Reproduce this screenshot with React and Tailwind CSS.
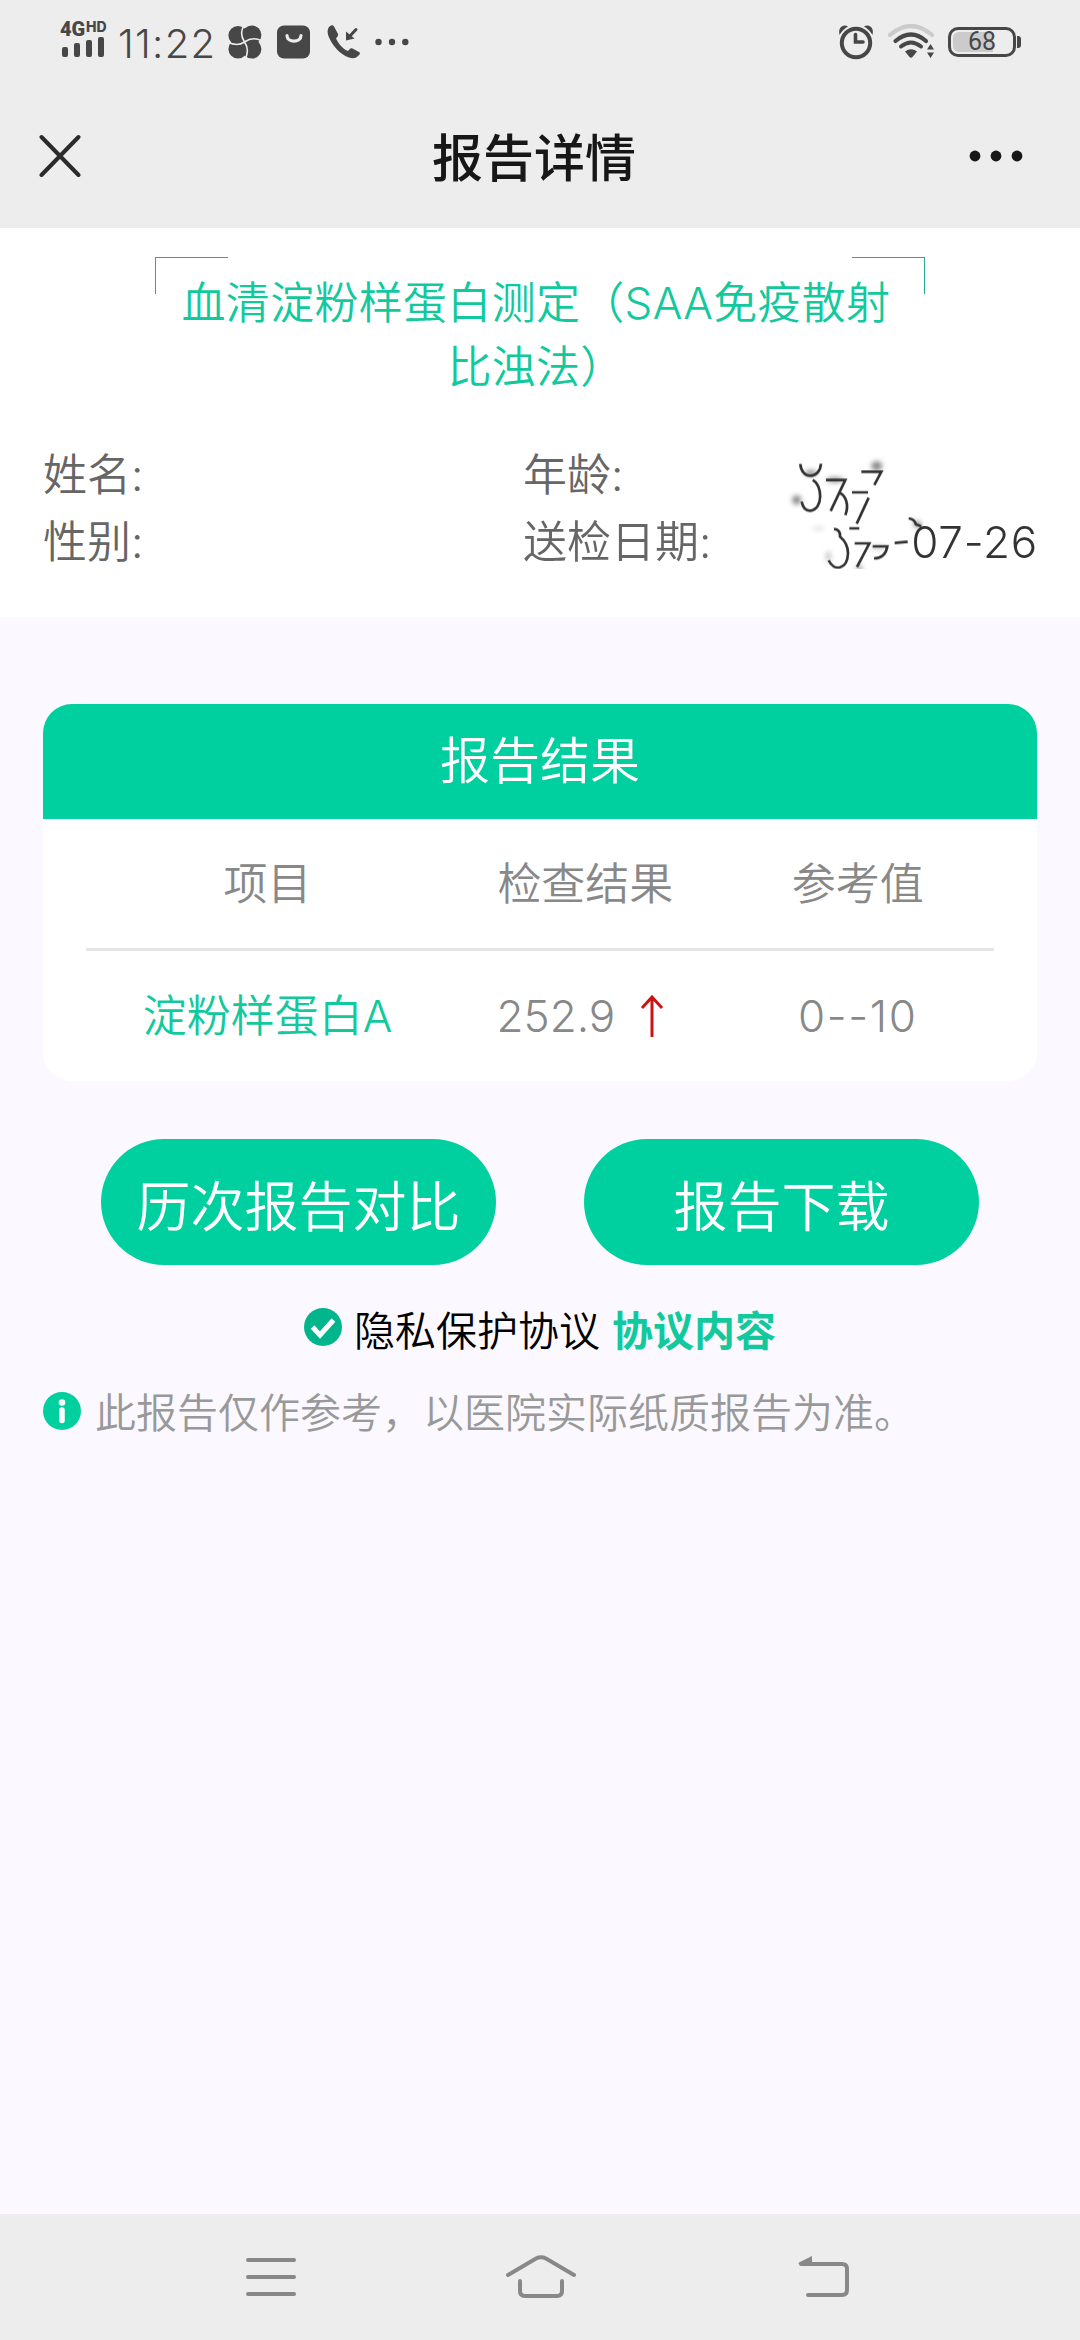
import React from 'react';

const columns = ['项目', '检查结果', '参考值'];

const results = [
  { name: '淀粉样蛋白A', value: '252.9', high: true, reference: '0--10' },
];

const StatusBar = () => (
  <div className="flex h-[84px] items-center justify-between text-[#474747]">
    <div className="flex items-center">
      <div className="ml-[60px] flex h-[84px] w-[48px] flex-col pt-[18px]">
        <div className="flex h-5 items-start font-bold">
          <span className="w-[26px] font-[Roboto] text-[20px] leading-[23px] font-black">4G</span>
          <span className="font-[Inter] text-[14px] leading-[18px] font-extrabold">HD</span>
        </div>
        <svg className="-mt-px ml-[2px]" width="44" height="20" viewBox="0 0 44 20" fill="currentColor">
          <rect x="0" y="10" width="6" height="10" rx="2" />
          <rect x="12" y="6" width="6" height="14" rx="2" />
          <rect x="24" y="3" width="6" height="17" rx="2" />
          <rect x="36" y="0" width="6" height="20" rx="2" />
        </svg>
      </div>
      <span className="ml-[10px] w-[109px] pt-[4px] text-[40px] leading-[48px] font-[350] tracking-[1.3px]">11:22</span>
      <svg className="ml-px" width="34" height="34" viewBox="0 0 34 34">
        <g fill="currentColor">
          <circle cx="10" cy="10.5" r="9.6" />
          <circle cx="23.8" cy="10" r="9.6" />
          <circle cx="10" cy="24" r="9.6" />
          <circle cx="23.8" cy="24" r="9.6" />
          <rect x="10" y="10" width="14" height="14" />
        </g>
        <g fill="none" stroke="#ededed" strokeWidth="1.6">
          <path d="M16 0Q11 9 16.500 17Q22 25 17 34" />
          <path d="M0 17Q9 22 16.500 17Q25 11 34 16" />
        </g>
      </svg>
      <svg className="ml-[15px]" width="34" height="34" viewBox="0 0 34 34">
        <rect x="0" y="0.500" width="33" height="33" rx="7" fill="currentColor" />
        <path d="M10 10.500C10 18 24 18 24 10.500" fill="none" stroke="#ededed" strokeWidth="3.200" strokeLinecap="round" />
      </svg>
      <svg className="ml-[16px]" width="34" height="34" viewBox="0 0 34 34">
        <path
          d="M3.500 0.800C0 3 -0.500 8 3 14.500C8 24 15 30 22 32.500C26 34 29 33.500 32.500 29.500C33.300 28.500 33 27.500 32 27L25.500 23.500C24.500 22.900 23.500 23 22.800 24L21 26C16.500 24.500 11.500 19 9 13.500L10.500 11.500C11.300 10.500 11.300 9.500 10.800 8.500L7 1.500C6.200 0 4.700 0 3.500 0.800Z"
          fill="currentColor"
        />
        <path d="M29 4.500L22 12" stroke="currentColor" strokeWidth="3" strokeLinecap="round" />
        <path d="M19 15.500V6.500L27.500 13.500Z" fill="currentColor" />
      </svg>
      <svg className="ml-[14px]" width="34" height="8" viewBox="0 0 34 8" fill="currentColor">
        <circle cx="3.500" cy="4" r="3.200" />
        <circle cx="17" cy="4" r="3.200" />
        <circle cx="30.300" cy="4" r="3.200" />
      </svg>
    </div>

    <div className="mr-[59px] flex items-center">
      <svg width="36" height="36" viewBox="0 0 36 36" fill="none" stroke="currentColor">
        <circle cx="18" cy="19" r="14.200" strokeWidth="4" />
        <path d="M17.500 10.500V18H25" strokeWidth="3.600" strokeLinecap="round" />
        <path d="M1.500 11Q0 5 4 2.200Q7 0.800 10 2.500Q4.500 5.500 1.500 11ZM34.500 11Q36 5 32 2.200Q29 0.800 26 2.500Q31.500 5.500 34.500 11Z" fill="currentColor" stroke="none" />
      </svg>
      <svg className="ml-[14px]" width="48" height="36" viewBox="0 0 48 36" fill="none" strokeLinecap="round">
        <path d="M2 11Q23 -7 44 11" stroke="#cbcbcb" strokeWidth="4.200" />
        <path d="M7.500 17Q23 4 38 17" stroke="currentColor" strokeWidth="4.200" />
        <path d="M13 22.500Q23 14.500 33 22.500" stroke="currentColor" strokeWidth="4" />
        <path d="M17 27.500Q23 23 29 27.500L24.500 33Q23 34.500 21.500 33Z" fill="currentColor" />
        <path d="M42.500 20L46 25.500H39ZM42.500 34L39 28.500H46Z" fill="currentColor" />
      </svg>
      <div className="relative ml-[12px] flex h-[30px] w-[68px] items-center justify-center rounded-[10px] border-[3px] border-[#474747]">
        <div className="absolute top-[2px] left-[2px] h-5 w-[40px] rounded-l-[6px] bg-[#cbcbcb]" />
        <span className="relative font-[Roboto] text-[25px] leading-[30px]">68</span>
      </div>
      <div className="ml-px h-[12px] w-[4px] rounded-r-[3px] bg-[#474747]" />
    </div>
  </div>
);

const TitleBar = () => (
  <div className="grid h-[144px] grid-cols-[1fr_204px_1fr] items-center">
    <svg className="ml-[39px]" width="42" height="44" viewBox="0 0 42 44" stroke="#2b2b2b" strokeWidth="4" strokeLinecap="round">
      <path d="M2.500 3L39.500 41M39.500 3L2.500 41" />
    </svg>
    <h1 className="-ml-[6px] pt-[6px] text-[51px] leading-[72px] font-medium whitespace-nowrap text-[#171717]">报告详情</h1>
    <svg className="mr-[57px] justify-self-end" width="54" height="12" viewBox="0 0 54 12" fill="#171717">
      <circle cx="6" cy="6" r="5.400" />
      <circle cx="27" cy="6" r="5.400" />
      <circle cx="48" cy="6" r="5.400" />
    </svg>
  </div>
);

// leftovers of the erased age and year values
const Smudge = () => (
  <svg className="absolute -top-[7px] left-[237px]" width="164" height="134" viewBox="0 0 492 402" fill="none">
    <defs>
      <filter id="soft" x="-50%" y="-50%" width="200%" height="200%">
        <feGaussianBlur stdDeviation="8" />
      </filter>
    </defs>
    <g filter="url(#soft)" fill="#333" opacity="0.6">
      <ellipse cx="110" cy="195" rx="13" ry="14" />
      <ellipse cx="350" cy="93" rx="16" ry="14" />
      <ellipse cx="152" cy="114" rx="18" ry="8" />
      <ellipse cx="225" cy="134" rx="26" ry="7" />
      <ellipse cx="298" cy="400" rx="8" ry="8" />
      <ellipse cx="205" cy="365" rx="7" ry="16" opacity="0.5" />
      <ellipse cx="355" cy="338" rx="24" ry="5" opacity="0.5" />
      <ellipse cx="175" cy="280" rx="16" ry="4" opacity="0.4" />
      <ellipse cx="472" cy="268" rx="12" ry="9" />
    </g>
    <g stroke="#333" strokeWidth="8">
      <path d="M121 87C124 135 180 133 183 86" />
      <path d="M158 135C188 150 190 222 152 227C137 228 128 216 125 200" />
      <path d="M198 135H256L212 228M236 172C258 180 268 210 256 240" />
      <path d="M304 110H364L343 150M276 172H324M326 188L290 266M268 280H298" />
      <path d="M222 282Q242 284 240 305Q264 325 264 355C262 405 222 410 206 376" />
      <path d="M284 325H328L291 396M338 334H382Q376 370 342 370" />
      <path d="M404 324L443 320" />
      <path d="M446 250Q463 252 468 268L484 274" />
    </g>
  </svg>
);

const Field = ({ label, value, smudged }) => (
  <div className="relative flex h-[67px] items-center justify-between">
    <span className="text-[#666]">{label}:</span>
    {smudged && <Smudge />}
    {value && <span className="-mr-px tracking-[0.8px] text-[#333]">{value}</span>}
  </div>
);

const PatientInfo = () => (
  <section className="h-[389px] bg-white px-[43px] pt-[29px]">
    <div className="relative mx-auto w-[770px]">
      <div className="absolute top-0 left-0 h-[37px] w-[73px] border-t border-l border-[#25aa98]" />
      <div className="absolute top-0 right-0 h-[37px] w-[73px] border-t border-r border-[#25aa98]" />
      <h2 className="pt-[14px] pr-[8px] text-center text-[44px] leading-[64px] font-[350] tracking-[0.3px] text-[#12c99d]">
        血清淀粉样蛋白测定（SAA免疫散射
        <br />
        比浊法）
      </h2>
    </div>
    <div className="mt-[43px] grid grid-cols-[480px_1fr] text-[44px] leading-[67px] font-[350]">
      <Field label="姓名" />
      <Field label="年龄" smudged />
      <Field label="性别" />
      <Field label="送检日期" value="07-26" />
    </div>
  </section>
);

const UpArrow = () => (
  <svg width="24" height="42" viewBox="0 0 24 42" fill="none" stroke="#cc1414" strokeWidth="3">
    <path d="M12 42V2M2 13L12 2L22 13" />
  </svg>
);

const ResultCard = () => (
  <section className="mx-[43px] mt-[87px] h-[377px] overflow-hidden rounded-[29px] bg-white">
    <h3 className="flex h-[115px] items-center justify-center bg-[#00cf9f] text-[50px] font-[350] text-white">报告结果</h3>
    <div className="mx-[43px] text-[44px] font-[350] text-[#888]">
      <div className="grid h-[132px] grid-cols-[40%_30%_30%] items-center border-b-3 border-[#e5e5e5] text-center">
        {columns.map(c => (
          <span key={c}>{c}</span>
        ))}
      </div>
      {results.map(r => (
        <div key={r.name} className="grid h-[130px] grid-cols-[40%_30%_30%] items-center text-center">
          <span className="text-[#12c99d]">{r.name}</span>
          <span className="flex items-center justify-center gap-[25px] pr-[10px]">
            {r.value}
            {r.high && <UpArrow />}
          </span>
          <span className="tracking-[1.6px]">{r.reference}</span>
        </div>
      ))}
    </div>
  </section>
);

const PillButton = ({ children }) => (
  <button className="h-[126px] w-[395px] rounded-full bg-[#00cf9f] pt-[11px] text-[54px] font-[350] text-white">{children}</button>
);

const NavBar = () => (
  <nav className="mt-auto h-[126px] bg-[#ededed]">
    <div className="flex h-[126px] items-center pl-[246px]">
      <svg width="50" height="40" viewBox="0 0 50 40" stroke="#888" strokeWidth="4" strokeLinecap="round">
        <path d="M2 3H48M2 20H48M2 37H48" />
      </svg>
      <svg className="ml-[210px]" width="70" height="44" viewBox="0 0 70 44" fill="none" stroke="#888" strokeWidth="4" strokeLinecap="round">
        <path d="M2 20L30 3.500Q35 1 40 3.500L68 20" />
        <path d="M14 26V36Q14 41 19 41H51Q56 41 56 36V26" />
      </svg>
      <svg className="ml-[222px]" width="51" height="42" viewBox="0 0 51 42" fill="none" stroke="#888" strokeWidth="4" strokeLinecap="round">
        <path d="M3 8H44Q49 8 49 13V34Q49 39 44 39H10" />
        <path d="M14 0V8H1Q0 7.500 1 6.500Z" fill="#888" stroke="none" />
      </svg>
    </div>
  </nav>
);

export default function App() {
  return (
    <div className="flex h-[2340px] w-[1080px] flex-col bg-[#fbf9ff] font-['Inter','Noto_Sans_CJK_SC',sans-serif]">
      <header className="bg-[#ededed]">
        <StatusBar />
        <TitleBar />
      </header>

      <PatientInfo />
      <ResultCard />

      <div className="mt-[58px] flex justify-center gap-[88px]">
        <PillButton>历次报告对比</PillButton>
        <PillButton>报告下载</PillButton>
      </div>

      <div className="mt-[31px] flex h-[70px] items-center justify-center text-[41px] leading-[70px] font-[350] text-black">
        <svg className="mb-[8px]" width="38" height="38" viewBox="0 0 38 38">
          <circle cx="19" cy="19" r="19" fill="#00b58c" />
          <path d="M8.500 19L16 27L29.500 12" fill="none" stroke="#fff" strokeWidth="5" />
        </svg>
        <span className="ml-[12px]">隐私保护协议</span>
        <span className="ml-[12px] font-bold text-[#12c99d]">协议内容</span>
      </div>

      <div className="mt-[12px] flex h-[70px] items-center px-[43px] text-[41px] leading-[70px] font-[350] text-[#999]">
        <svg className="mb-[4px]" width="38" height="38" viewBox="0 0 38 38">
          <circle cx="19" cy="19" r="19" fill="#00cf9f" />
          <circle cx="19" cy="10.500" r="3.300" fill="#fff" />
          <path d="M19 18V28.500" stroke="#fff" strokeWidth="5.500" strokeLinecap="round" />
        </svg>
        <span className="ml-[14px]">此报告仅作参考，以医院实际纸质报告为准。</span>
      </div>

      <NavBar />
    </div>
  );
}
